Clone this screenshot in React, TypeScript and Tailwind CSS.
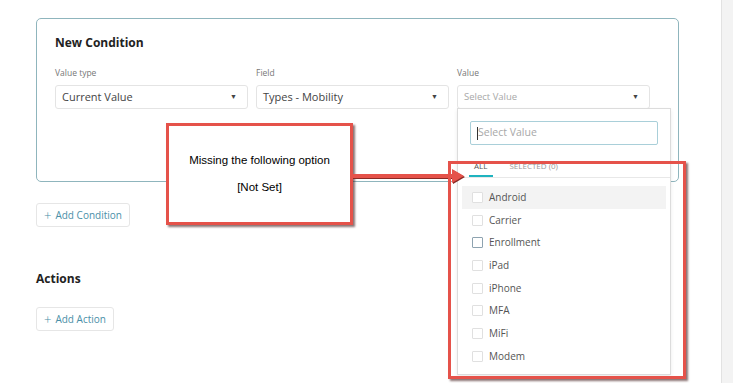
import React from "react"

const items = ["Android", "Carrier", "Enrollment", "iPad", "iPhone", "MFA", "MiFi", "Modem"]

function Caret() {
  return <span className="text-[7px] text-[#444]">▼</span>
}

function SelectBox({ value, placeholder }: { value?: string; placeholder?: string }) {
  return (
    <div className="flex h-[24px] items-center justify-between rounded-[3px] border border-[#e4e4e4] bg-white pl-[6px] pr-[10px]">
      {value ? (
        <span className="text-[11px] text-[#444]">{value}</span>
      ) : (
        <span className="text-[9.5px] text-[#a8a8a8]">{placeholder}</span>
      )}
      <Caret />
    </div>
  )
}

function Field({ label, children }: { label: string; children: React.ReactNode }) {
  return (
    <div className="flex w-[193px] flex-col">
      <span className="mb-[5px] text-[8.5px] text-[#777]">{label}</span>
      {children}
    </div>
  )
}

function OutlineButton({ label }: { label: string }) {
  return (
    <button className="flex h-[24px] items-center gap-[4px] rounded-[3px] border border-[#e6e6e6] bg-white px-[7px] text-[10px] text-[#4a8fa8]">
      <span className="text-[13px] font-light leading-none">+</span>
      {label}
    </button>
  )
}

export default function App() {
  return (
    <div
      className="relative flex h-[383px] w-[733px] overflow-hidden bg-white"
      style={{ fontFamily: '"Open Sans", "Noto Sans", sans-serif' }}
    >
      <div className="flex flex-1 flex-col pl-[36px] pt-[18px]">
        <div className="flex h-[164px] w-[643px] flex-col rounded-[5px] border border-[#8fb5bd] pl-[18px] pt-[15px]">
          <h2 className="text-[12px] font-bold text-[#222]">New Condition</h2>
          <div className="mt-[15px] flex gap-[8px]">
            <Field label="Value type">
              <SelectBox value="Current Value" />
            </Field>
            <Field label="Field">
              <SelectBox value="Types - Mobility" />
            </Field>
            <Field label="Value">
              <SelectBox placeholder="Select Value" />
            </Field>
          </div>
          <div className="mt-[28px] flex w-[596px] justify-end gap-[8px]">
            <button className="h-[24px] w-[64px] rounded-[3px] border border-[#e4e4e4] bg-white pl-[15px] text-left text-[10.5px] text-[#4a8fa8]">
              Delete
            </button>
            <button className="h-[24px] w-[60px] rounded-[3px] bg-[#4a8fa8] text-[10.5px] text-white">Save</button>
          </div>
        </div>

        <div className="mt-[21px]">
          <OutlineButton label="Add Condition" />
        </div>

        <h2 className="mt-[43px] text-[12px] font-bold text-[#222]">Actions</h2>

        <div className="mt-[19px]">
          <OutlineButton label="Add Action" />
        </div>
      </div>

      <div className="w-[12px] border-l border-[#e2e2e2] bg-[#f3f3f3]" />

      {/* dropdown panel */}
      <div className="absolute left-[457px] top-[108px] flex h-[267px] w-[214px] flex-col border border-[#dcdcdc] bg-white shadow-[0_2px_4px_rgba(0,0,0,0.08)]">
        <div className="px-[12px] pt-[12px]">
          <div className="flex h-[24px] items-center rounded-[2px] border border-[#a9cfd9] px-[6px]">
            <span className="h-[13px] w-px bg-[#333]" />
            <span className="text-[10.5px] text-[#a8a8a8]">Select Value</span>
          </div>
        </div>
        <div className="mt-[15px] flex gap-[16px] border-b border-[#e8e8e8] px-[10px]">
          <div className="flex flex-col items-center">
            <span className="px-[6px] text-[8px] text-[#555]">ALL</span>
            <span className="mt-[3px] h-[2px] w-[24px] bg-[#1fb3bf]" />
          </div>
          <span className="text-[8px] text-[#999]">SELECTED (0)</span>
        </div>
        <div className="mt-[8px] flex flex-col">
          {items.map((item, i) => (
            <div
              key={item}
              className={`mx-[4px] flex h-[22.7px] items-center gap-[6px] pl-[10px] ${i === 0 ? "bg-[#f3f3f3]" : ""}`}
            >
              <span
                className={`h-[11px] w-[11px] rounded-[1px] border bg-white ${
                  item === "Enrollment" ? "border-[#8ea3b0]" : "border-[#e0e0e0]"
                }`}
              />
              <span className="text-[10px] text-[#555]">{item}</span>
            </div>
          ))}
        </div>
      </div>

      {/* annotation box */}
      <div
        className="absolute left-[166px] top-[123px] flex h-[102px] w-[187px] flex-col items-center justify-center gap-[10px] border-[3px] border-[#e5524a] bg-white text-[11.5px] text-black shadow-[2px_2px_2px_rgba(60,20,20,0.6)]"
        style={{ fontFamily: '"Liberation Sans", Arial, sans-serif' }}
      >
        <span>Missing the following option</span>
        <span>[Not Set]</span>
      </div>

      {/* arrow */}
      <svg className="absolute left-[352px] top-[166px]" width="118" height="20" viewBox="0 0 118 20">
        <path d="M0 8 H100 V3 L112 10 L100 17 V12 H0 Z" fill="#8a2a25" transform="translate(1 1)" />
        <path d="M0 8 H100 V3 L112 10 L100 17 V12 H0 Z" fill="#e5524a" />
      </svg>

      {/* highlight box */}
      <div className="absolute left-[448px] top-[161px] h-[218px] w-[238px] border-[3px] border-[#e5524a] shadow-[2px_2px_2px_rgba(60,20,20,0.6)]" />
    </div>
  )
}
